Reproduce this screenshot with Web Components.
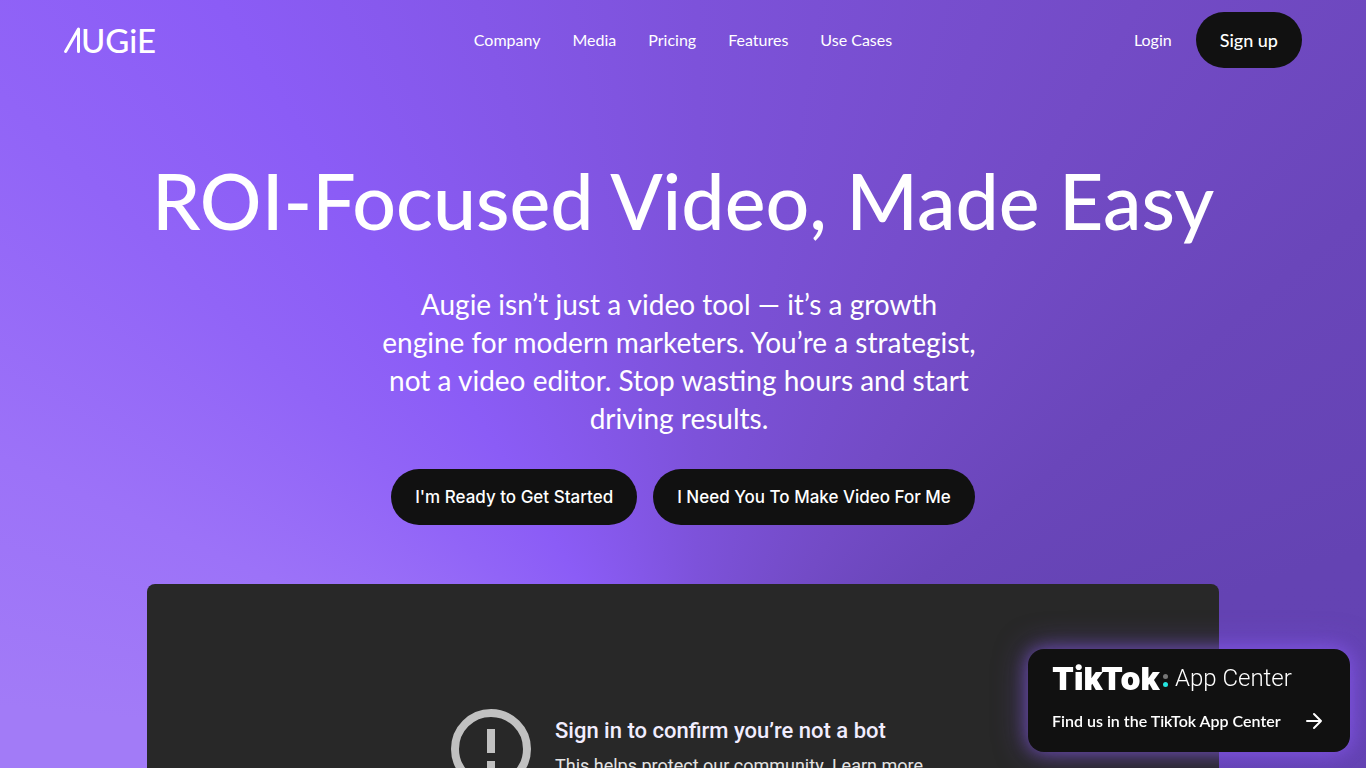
<!DOCTYPE html>
<html lang="en">
<head>
<meta charset="utf-8">
<meta name="viewport" content="width=device-width, initial-scale=1">
<title>Augie</title>
<style>
  html { scrollbar-width: none; }
  body { margin: 0; font-family: Lato, sans-serif; color: #fff; background: #6443b3; }
</style>
</head>
<body>
<augie-page></augie-page>
<script>
class Base extends HTMLElement {
  constructor() {
    super();
    this.attachShadow({ mode: 'open' }).innerHTML = this.render();
  }
}

customElements.define('augie-logo', class extends Base {
  render() {
    return `
    <style>
      :host { display: block; }
      a { display: inline-flex; align-items: center; color: #fff; text-decoration: none; }
      svg { width: 17px; height: 28px; display: block; }
      span { font: 500 33px/40px Lato, sans-serif; }
    </style>
    <a href="#" aria-label="Augie home">
      <svg viewBox="0 0 17 28" fill="none" stroke="#fff" stroke-width="3" stroke-linecap="round" stroke-linejoin="round" aria-hidden="true"><path d="M1.6 25.4 14.5 3v22.4"/></svg>
      <span>UGiE</span>
    </a>`;
  }
});

customElements.define('pill-button', class extends Base {
  render() {
    return `
    <style>
      :host { display: block; font: 500 17px/24px Inter, sans-serif; }
      button { font: inherit; color: #fff; background: #111; border: 0; border-radius: 28px; padding: 16px 24px; white-space: nowrap; cursor: pointer; display: block; }
    </style>
    <button type="button"><slot></slot></button>`;
  }
});

customElements.define('site-header', class extends Base {
  render() {
    return `
    <style>
      :host { display: grid; grid-template-columns: 1fr auto 1fr; align-items: center; padding: 12px 64px; font-size: 16px; line-height: 24px; }
      nav { display: flex; gap: 32px; }
      a { color: #fff; text-decoration: none; }
      .account { display: flex; justify-content: flex-end; align-items: center; gap: 24px; }
      pill-button { font: 500 18px/24px Lato, sans-serif; }
    </style>
    <augie-logo></augie-logo>
    <nav>
      <a href="#">Company</a><a href="#">Media</a><a href="#">Pricing</a><a href="#">Features</a><a href="#">Use Cases</a>
    </nav>
    <div class="account"><a href="#">Login</a><pill-button>Sign up</pill-button></div>`;
  }
});

customElements.define('hero-intro', class extends Base {
  render() {
    return `
    <style>
      :host { display: flex; flex-direction: column; align-items: center; text-align: center; padding: 78px 64px 0; }
      h1 { margin: 0; font-size: 77px; line-height: 84px; font-weight: 500; }
      p { margin: 43px 8px 32px 0; max-width: 600px; font-size: 28px; line-height: 38px; }
      div { display: flex; gap: 16px; }
    </style>
    <h1>ROI-Focused Video, Made Easy</h1>
    <p>Augie isn’t just a video tool — it’s a growth engine for modern marketers. You’re a strategist, not a video editor. Stop wasting hours and start driving results.</p>
    <div><pill-button>I'm Ready to Get Started</pill-button><pill-button>I Need You To Make Video For Me</pill-button></div>`;
  }
});

customElements.define('video-frame', class extends Base {
  render() {
    return `
    <style>
      :host { display: block; width: calc(100% - 128px); max-width: 1072px; aspect-ratio: 16 / 9; margin: 59px auto 64px; box-sizing: border-box; background: #282828; border-radius: 8px; font-family: Roboto, sans-serif; }
      .notice { display: flex; justify-content: center; gap: 24px; padding: 125px 0 0 8px; }
      svg { width: 80px; height: 80px; flex: none; }
      h2 { margin: 6px 0 7px; font-size: 22px; line-height: 32px; font-weight: 500; color: #f1edff; }
      p { margin: 0; font-size: 18px; line-height: 24px; color: #e3e3e3; }
      a { color: inherit; text-decoration: none; }
    </style>
    <div class="notice">
      <svg viewBox="0 0 80 80" aria-hidden="true"><circle cx="40" cy="40" r="36" fill="none" stroke="#c1c1c1" stroke-width="8"/><path fill="#c1c1c1" d="M36 20h8v24h-8zM36 52h8v8h-8z"/></svg>
      <div><h2>Sign in to confirm you’re not a bot</h2><p>This helps protect our community. <a href="#">Learn more</a></p></div>
    </div>`;
  }
});

customElements.define('tiktok-card', class extends Base {
  render() {
    return `
    <style>
      :host { position: fixed; right: 16px; bottom: 16px; display: block; }
      a { display: block; box-sizing: border-box; width: 322px; padding: 13px 24px 19px; border-radius: 16px; background: #111; color: #fff; text-decoration: none; box-shadow: 0 0 16px #8b5cf680, 0 0 32px #8b5cf680; }
      .brand { display: flex; align-items: center; height: 33px; }
      b { font: 900 32px/33px Inter, sans-serif; }
      i { display: grid; gap: 3px; margin: 3px 7px 0 3px; }
      i::before, i::after { content: ""; width: 5px; height: 5px; border-radius: 50%; background: #777; }
      i::after { background: #25e5df; }
      span { font: 300 24px/33px Roboto, sans-serif; }
      .cta { display: flex; align-items: center; justify-content: space-between; margin-top: 14px; font-size: 16px; line-height: 24px; font-weight: 600; }
      svg { width: 24px; height: 24px; }
    </style>
    <a href="#">
      <div class="brand"><b>TikTok</b><i></i><span>App Center</span></div>
      <div class="cta">Find us in the TikTok App Center
        <svg viewBox="0 0 24 24" fill="none" stroke="#fff" stroke-width="2" stroke-linecap="round" stroke-linejoin="round" aria-hidden="true"><path d="M5 12h14M12 5l7 7-7 7"/></svg>
      </div>
    </a>`;
  }
});

customElements.define('augie-page', class extends Base {
  render() {
    return `
    <style>
      :host {
        display: block; overflow: hidden;
        background: conic-gradient(from 0deg at 51% 768px, #7d52da 0deg, #734bc6 30deg, #6a46ba 50deg, #6443b3 72deg, #6342b0 180deg, #a27bf7 240deg, #a27bf7 275deg, #9c72f8 294deg, #9164f7 314deg, #8b5cf6 328deg, #7d52da 360deg);
      }
    </style>
    <site-header></site-header>
    <main><hero-intro></hero-intro><video-frame></video-frame></main>
    <tiktok-card></tiktok-card>`;
  }
});
</script>
</body>
</html>
